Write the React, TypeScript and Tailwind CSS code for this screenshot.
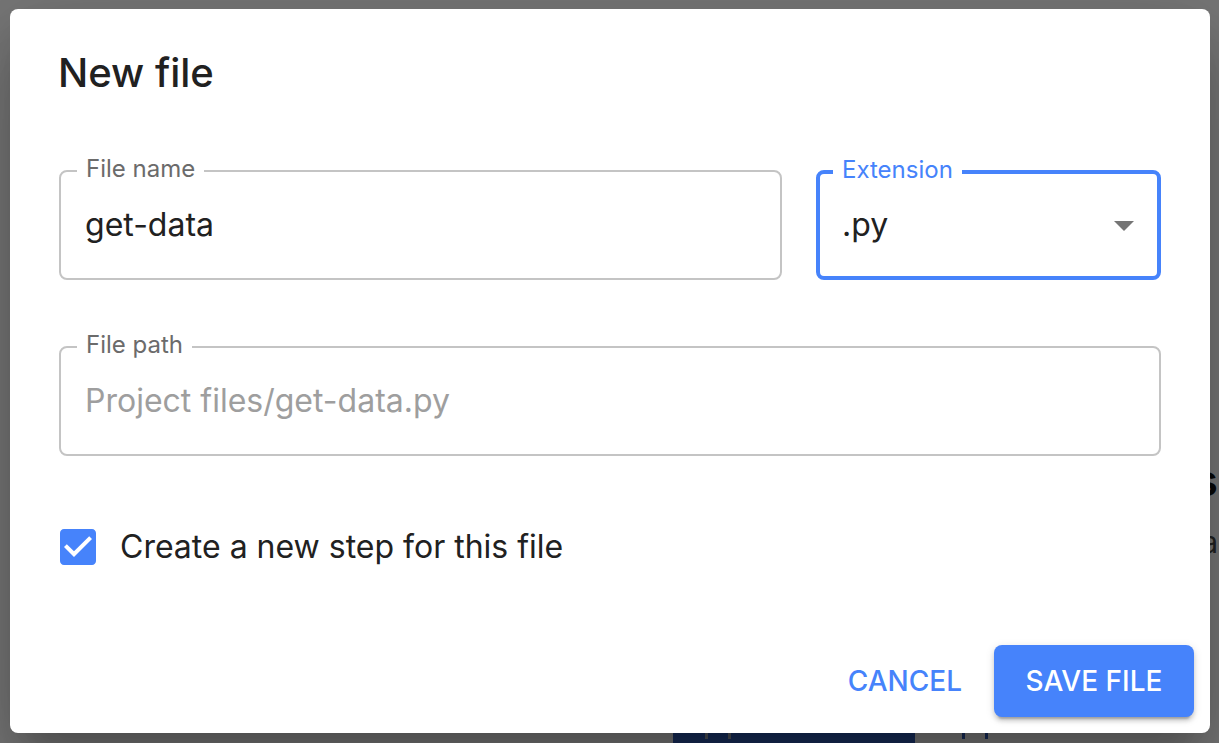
import React from "react";

const BLUE = "#4683fb";

function Field({
  label,
  value,
  focused,
  disabled,
  className,
  children,
}: {
  label: string;
  value: string;
  focused?: boolean;
  disabled?: boolean;
  className?: string;
  children?: React.ReactNode;
}) {
  return (
    <div
      className={
        "relative h-[110px] rounded-[8px] flex items-center " +
        (focused ? "border-[4px] border-[#4683fb] pl-[22px] " : "border-[2px] border-[#c4c4c4] pl-[24px] ") +
        (className ?? "")
      }
    >
      <span
        className={
          "absolute -translate-y-1/2 bg-white px-[9px] text-[24px] leading-[28px] " +
          (focused ? "top-[-4px] left-[13px] text-[#4683fb]" : "top-[-3px] left-[16px] text-[#6b6b6b]")
        }
      >
        {label}
      </span>
      <span className={"text-[32px] leading-[40px] " + (disabled ? "text-[#9e9e9e]" : "text-[#212121]")}>
        {value}
      </span>
      {children}
    </div>
  );
}

export default function App() {
  return (
    <div
      className="relative h-[743px] w-full overflow-hidden bg-[#eeeeee]"
      style={{ fontFamily: "Inter, 'Noto Sans', sans-serif" }}
    >
      {/* page behind the dialog */}
      <div className="flex h-full flex-col">
        <div className="flex flex-1 justify-end pr-[1px] pt-[452px]">
          <div className="flex flex-col items-end">
            <div className="text-[44px] font-semibold leading-[56px] text-[#111111]">Steps</div>
            <div className="mt-[14px] text-[30px] leading-[40px] text-[#444444]">data</div>
          </div>
        </div>
        <div className="flex h-[14px] items-start pl-[673px]">
          <div className="flex h-[14px] w-[242px] items-start bg-[#2f5ab2] pl-[32px]">
            <div className="h-[10px] w-[26px] rounded-t-[3px] border-[3px] border-b-0 border-[#9aa0aa]" />
          </div>
          <div className="ml-[47px] h-[10px] w-[26px] rounded-t-[3px] border-[3px] border-b-0 border-[#2f5ab2]" />
        </div>
      </div>

      {/* backdrop */}
      <div className="absolute inset-0 bg-black/50" />

      {/* dialog */}
      <div className="absolute left-[10px] top-[9px] flex h-[724px] w-[1200px] flex-col rounded-[8px] bg-white shadow-[0_22px_30px_-14px_rgba(0,0,0,0.2),0_48px_76px_6px_rgba(0,0,0,0.14),0_18px_92px_16px_rgba(0,0,0,0.12)]">
        <div className="px-[48px] pt-[32px] text-[40px] font-medium leading-[64px] text-[#212121]">New file</div>

        <div className="mt-[65px] flex flex-col px-[49px]">
          <div className="flex gap-[34px]">
            <Field label="File name" value="get-data" className="flex-1" />
            <Field label="Extension" value=".py" focused className="w-[345px]">
              <svg
                viewBox="0 0 24 24"
                className="absolute right-[9px] top-1/2 h-[48px] w-[48px] -translate-y-1/2"
                fill="#757575"
              >
                <path d="M7 10l5 5 5-5z" />
              </svg>
            </Field>
          </div>

          <Field label="File path" value="Project files/get-data.py" disabled className="mt-[66px]" />

          <div className="mt-[67px] flex items-center">
            <svg viewBox="0 0 24 24" className="ml-[-5px] h-[48px] w-[48px]" fill={BLUE}>
              <path d="M19 3H5c-1.11 0-2 .9-2 2v14c0 1.1.89 2 2 2h14c1.11 0 2-.9 2-2V5c0-1.1-.89-2-2-2zm-9 14l-5-5 1.41-1.41L10 14.17l7.59-7.59L19 8l-9 9z" />
            </svg>
            <span className="ml-[18px] text-[32px] leading-[48px] text-[#212121]">Create a new step for this file</span>
          </div>
        </div>

        <div className="mt-auto flex items-center justify-end gap-[16px] pb-[16px] pr-[16px]">
          <button className="flex h-[72px] items-center rounded-[8px] px-[16px] text-[28px] font-medium uppercase text-[#4683fb]">
            Cancel
          </button>
          <button className="flex h-[72px] w-[200px] items-center justify-center rounded-[8px] bg-[#4683fb] text-[28px] font-medium uppercase text-white shadow-[0_6px_2px_-4px_rgba(0,0,0,0.2),0_4px_4px_0_rgba(0,0,0,0.14),0_2px_10px_0_rgba(0,0,0,0.12)]">
            Save file
          </button>
        </div>
      </div>
    </div>
  );
}
